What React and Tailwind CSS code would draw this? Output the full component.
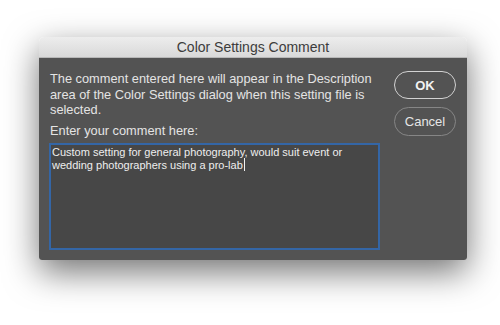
export default function App() {
  return (
    <div className="w-[500px] h-[325px] bg-white pt-[37px] pl-[39px] overflow-hidden" style={{ fontFamily: '"Liberation Sans", Arial, sans-serif' }}>
      <div className="w-[428px] h-[223px] flex flex-col rounded-t-[5px] rounded-b-[3px] overflow-hidden shadow-[0_12px_34px_rgba(0,0,0,0.55)]">
        <div className="h-[21px] shrink-0 flex items-center justify-center bg-gradient-to-b from-[#ededed] to-[#d9d9d9] border-b border-[#b8b8b8] text-[14px] text-[#3c3c3c] leading-none">
          Color Settings Comment
        </div>
        <div className="flex-1 bg-[#535353] flex pl-[10px] pr-[11px] pt-[13px] pb-[10px]">
          <div className="w-[331px] flex flex-col text-[#e4e4e4] text-[12.8px]">
            <p className="pl-[1px] leading-[15.5px]">
              The comment entered here will appear in the Description
              <br />
              area of the Color Settings dialog when this setting file is
              <br />
              selected.
            </p>
            <p className="pl-[1px] leading-[16px] mt-[5px]">Enter your comment here:</p>
            <div className="mt-[4px] h-[107px] bg-[#474747] border-2 border-[#3466a6] px-[1px] pt-[1px] text-[11px] leading-[12.6px] text-[#eeeeee]">
              Custom setting for general photography, would suit event or
              <br />
              wedding photographers using a pro-lab
              <span className="inline-block w-px h-[13px] bg-[#f0f0f0] align-[-2px] ml-[1px]" />
            </div>
          </div>
          <div className="flex-1 flex flex-col items-end gap-[8px]">
            <button className="w-[62px] h-[28px] rounded-full border-[1.5px] border-[#d2d2d2] text-[13px] font-bold text-[#f2f2f2] leading-none">
              OK
            </button>
            <button className="w-[62px] h-[29px] rounded-full border border-[#868686] text-[13px] text-[#e6e6e6] leading-none">
              Cancel
            </button>
          </div>
        </div>
      </div>
    </div>
  );
}
